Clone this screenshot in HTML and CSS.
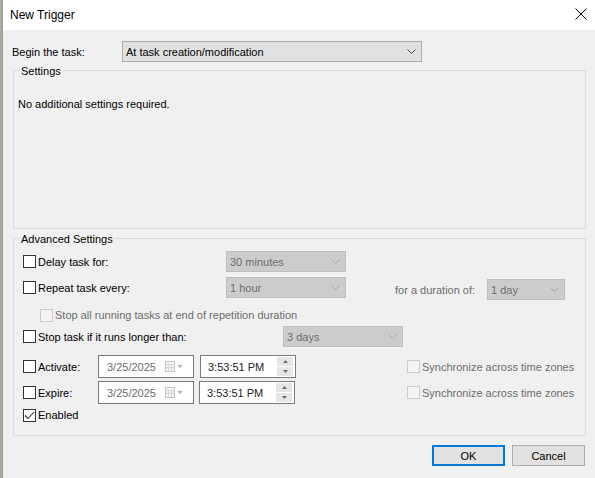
FILE: index.html
```html
<!DOCTYPE html>
<html lang="en">

<head>
  <meta charset="UTF-8">
  <title>New Trigger</title>
  <link rel="stylesheet" href="styles.css">
</head>

<body>
  <div class="window">
    <div class="titlebar">
      <span class="title">New Trigger</span>
      <svg class="close" width="12" height="12" viewBox="0 0 12 12">
        <path d="M0.5 0.5L11.5 11.5M11.5 0.5L0.5 11.5" stroke="#000" stroke-width="1" fill="none" />
      </svg>
    </div>

    <div class="content">
      <div class="begin">
        <span class="begin-label">Begin the task:</span>
        <div class="select begin-select">
          <span>At task creation/modification</span>
          <svg class="chev" width="9" height="5" viewBox="0 0 9 5"><path d="M0.5 0.5L4.5 4.5L8.5 0.5" stroke="#444" fill="none" /></svg>
        </div>
      </div>

      <div class="group settings">
        <div class="group-title">Settings</div>
        <p class="note">No additional settings required.</p>
      </div>

      <div class="group advanced">
        <div class="group-title">Advanced Settings</div>

        <div class="row row-delay">
          <span class="check"></span>
          <span class="label w-188">Delay task for:</span>
          <div class="select disabled w-120">
            <span>30 minutes</span>
            <svg class="chev" width="9" height="5" viewBox="0 0 9 5"><path d="M0.5 0.5L4.5 4.5L8.5 0.5" stroke="#a8a8a8" fill="none" /></svg>
          </div>
        </div>

        <div class="row row-repeat">
          <span class="check"></span>
          <span class="label w-188">Repeat task every:</span>
          <div class="select disabled w-120">
            <span>1 hour</span>
            <svg class="chev" width="9" height="5" viewBox="0 0 9 5"><path d="M0.5 0.5L4.5 4.5L8.5 0.5" stroke="#a8a8a8" fill="none" /></svg>
          </div>
          <div class="duration">
            <span class="label muted w-92">for a duration of:</span>
            <div class="select disabled w-78">
              <span>1 day</span>
              <svg class="chev" width="9" height="5" viewBox="0 0 9 5"><path d="M0.5 0.5L4.5 4.5L8.5 0.5" stroke="#a8a8a8" fill="none" /></svg>
            </div>
          </div>
        </div>

        <div class="row row-stopall">
          <span class="check off"></span>
          <span class="label muted">Stop all running tasks at end of repetition duration</span>
        </div>

        <div class="row row-stop">
          <span class="check"></span>
          <span class="label w-245">Stop task if it runs longer than:</span>
          <div class="select disabled w-120">
            <span>3 days</span>
            <svg class="chev" width="9" height="5" viewBox="0 0 9 5"><path d="M0.5 0.5L4.5 4.5L8.5 0.5" stroke="#a8a8a8" fill="none" /></svg>
          </div>
        </div>

        <div class="row row-activate">
          <span class="check"></span>
          <span class="label w-60">Activate:</span>
          <div class="picker date">
            <span>3/25/2025</span>
            <svg class="cal" width="20" height="11" viewBox="0 0 20 11">
              <rect x="0.5" y="0.5" width="9" height="10" fill="#f6f6f6" stroke="#c4c4c4" />
              <path d="M0.5 3.5H9.5M0.5 6.5H9.5M3.5 3.5V10.5M6.5 3.5V10.5" stroke="#d6d6d6" />
              <path d="M12 4H18L15 7Z" fill="#b4b4b4" />
            </svg>
          </div>
          <div class="picker time">
            <span>3:53:51 PM</span>
            <div class="spin">
              <span class="spin-btn"><svg width="5" height="3" viewBox="0 0 5 3"><path d="M0 3L2.5 0L5 3Z" fill="#6a6a6a" /></svg></span>
              <span class="spin-btn"><svg width="5" height="3" viewBox="0 0 5 3"><path d="M0 0L2.5 3L5 0Z" fill="#6a6a6a" /></svg></span>
            </div>
          </div>
          <span class="check off sync"></span>
          <span class="label muted">Synchronize across time zones</span>
        </div>

        <div class="row row-expire">
          <span class="check"></span>
          <span class="label w-60">Expire:</span>
          <div class="picker date">
            <span>3/25/2025</span>
            <svg class="cal" width="20" height="11" viewBox="0 0 20 11">
              <rect x="0.5" y="0.5" width="9" height="10" fill="#f6f6f6" stroke="#c4c4c4" />
              <path d="M0.5 3.5H9.5M0.5 6.5H9.5M3.5 3.5V10.5M6.5 3.5V10.5" stroke="#d6d6d6" />
              <path d="M12 4H18L15 7Z" fill="#b4b4b4" />
            </svg>
          </div>
          <div class="picker time">
            <span>3:53:51 PM</span>
            <div class="spin">
              <span class="spin-btn"><svg width="5" height="3" viewBox="0 0 5 3"><path d="M0 3L2.5 0L5 3Z" fill="#6a6a6a" /></svg></span>
              <span class="spin-btn"><svg width="5" height="3" viewBox="0 0 5 3"><path d="M0 0L2.5 3L5 0Z" fill="#6a6a6a" /></svg></span>
            </div>
          </div>
          <span class="check off sync"></span>
          <span class="label muted">Synchronize across time zones</span>
        </div>

        <div class="row row-enabled">
          <span class="check on">
            <svg width="11" height="11" viewBox="0 0 11 11"><path d="M1 5.5L4 8.5L10 2" stroke="#333" stroke-width="1.1" fill="none" /></svg>
          </span>
          <span class="label">Enabled</span>
        </div>
      </div>

      <div class="buttons">
        <button class="btn btn-default">OK</button>
        <button class="btn">Cancel</button>
      </div>
    </div>
  </div>
</body>

</html>
```

FILE: styles.css
```css
* {
  box-sizing: border-box;
}

html,
body {
  margin: 0;
  padding: 0;
  height: 100%;
}

body {
  background: #a9ab9c;
  font-family: "Liberation Sans", Arial, sans-serif;
  font-size: 11px;
  line-height: 16px;
  color: #000;
}

.window {
  margin-left: 2px;
  height: 100%;
  border-left: 1px solid #9a9a9a;
  background: #f0f0f0;
}

/* title bar */
.titlebar {
  height: 30px;
  background: #fff;
  display: flex;
  align-items: center;
  justify-content: space-between;
  padding: 0 8px 0 7px;
}

.title {
  font-size: 12px;
}

.close {
  display: block;
  margin-top: -2px;
}

.content {
  padding: 11px 9px 0 9px;
}

/* begin row */
.begin {
  display: flex;
  align-items: center;
  height: 21px;
}

.begin-label {
  width: 110px;
  flex: none;
}

.select {
  flex: none;
  display: flex;
  align-items: center;
  justify-content: space-between;
  height: 21px;
  padding: 0 5px 0 3px;
  border: 1px solid #adadad;
  background: #e1e1e1;
  white-space: nowrap;
}

.begin-select {
  width: 300px;
}

.select.disabled {
  border-color: #bfbfbf;
  background: #cccccc;
  color: #6d6d6d;
}

.chev {
  display: block;
}

/* group boxes */
.group {
  margin-left: 1px;
  border: 1px solid #dcdcdc;
  padding-left: 4px;
}

.group-title {
  width: max-content;
  margin-top: -8px;
  margin-left: 1px;
  padding: 0 2px;
  background: #f0f0f0;
}

.settings {
  margin-top: 8px;
  height: 159px;
}

.note {
  margin: 17px 0 0 0;
}

.advanced {
  margin-top: 9px;
  height: 198px;
}

/* rows */
.row {
  display: flex;
  align-items: center;
  margin-left: 5px;
  white-space: nowrap;
}

.row-delay {
  margin-top: 4px;
  height: 21px;
}

.row-repeat {
  margin-top: 5px;
  height: 21px;
}

.row-stopall {
  margin-top: 6px;
  height: 22px;
  padding-left: 17px;
}

.row-stop {
  height: 21px;
}

.row-activate {
  margin-top: 8px;
  height: 23px;
}

.row-expire {
  margin-top: 3px;
  height: 23px;
}

.row-enabled {
  margin-top: 1px;
  height: 20px;
}

.check {
  flex: none;
  width: 13px;
  height: 13px;
  border: 1px solid #333;
  background: #fff;
  display: flex;
  align-items: center;
  justify-content: center;
}

.check.off {
  border-color: #cccccc;
  background: #f4f4f4;
}

.label {
  flex: none;
  margin-left: 2px;
}

.muted {
  color: #6d6d6d;
}

.w-188 {
  width: 188px;
}

.w-245 {
  width: 245px;
}

.w-60 {
  width: 60px;
}

.w-92 {
  width: 92px;
  margin-left: 0;
}

.w-120 {
  width: 120px;
}

.w-78 {
  width: 78px;
}

.duration {
  flex: none;
  display: flex;
  align-items: center;
  margin-left: 49px;
  margin-top: 4px;
}

/* date / time pickers */
.picker {
  flex: none;
  display: flex;
  align-items: center;
  justify-content: space-between;
  width: 96px;
  height: 23px;
  border: 1px solid #7a7a7a;
  background: #fff;
}

.date {
  padding: 0 8px 0 8px;
  color: #6d6d6d;
}

.time {
  margin-left: 6px;
  padding: 0 2px 0 7px;
  color: #222;
}

.row-expire .time {
  margin-left: 5px;
}

.spin {
  display: flex;
  flex-direction: column;
  gap: 1px;
}

.spin-btn {
  width: 16px;
  height: 9px;
  background: #e6e6e6;
  display: flex;
  align-items: center;
  justify-content: center;
}

.spin-btn svg {
  display: block;
}

.cal {
  display: block;
}

.sync {
  margin-left: 111px;
}

.row-expire .sync {
  margin-left: 112px;
}

/* buttons */
.buttons {
  display: flex;
  justify-content: flex-end;
  gap: 7px;
  margin-top: 9px;
  margin-right: 1px;
}

.btn {
  width: 73px;
  height: 21px;
  padding: 0;
  border: 1px solid #adadad;
  background: #e1e1e1;
  font-family: inherit;
  font-size: 11px;
  color: #000;
}

.btn-default {
  border: 2px solid #0078d7;
}
```
